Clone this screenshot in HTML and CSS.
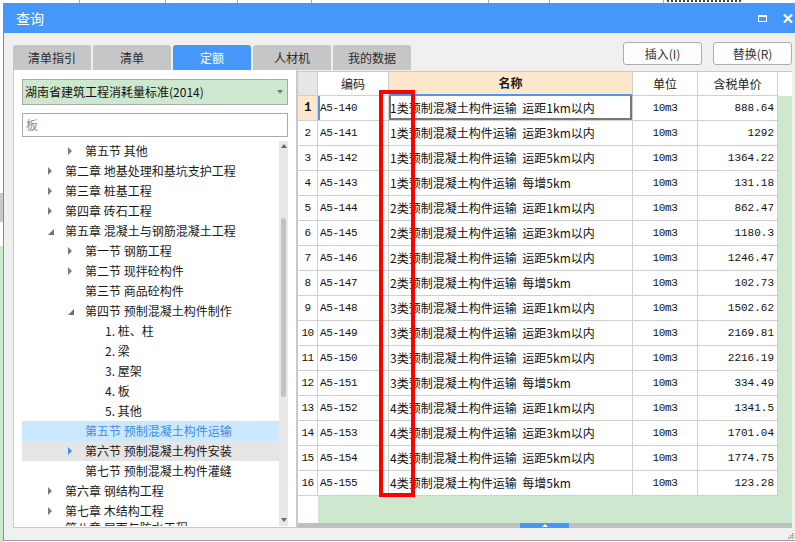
FILE: index.html
```html
<!DOCTYPE html>
<html lang="zh-CN">
<head>
<meta charset="utf-8">
<title>查询</title>
<link rel="stylesheet" href="styles.css">
</head>
<body>
<div class="app">
  <div class="app-top">
    <span class="ac w79"></span><span class="ac w86"></span><span class="ac w72"></span><span class="ac w74"></span><span class="ac w177"></span><span class="ac w61"></span><span class="ac w114"></span><span class="ac-text"></span>
  </div>
  <div class="app-side">
    <div class="side-a"></div>
    <div class="side-b"></div>
    <div class="side-c"></div>
    <div class="side-d"></div>
  </div>
</div>

<div class="dialog">
  <div class="titlebar">
    <span class="title">查询</span>
    <span class="win-btns">
      <span class="ico-max"></span>
      <svg class="ico-close" width="10" height="9" viewBox="0 0 10 9"><path d="M1 0.5 L9 8.5 M9 0.5 L1 8.5" stroke="#fff" stroke-width="2.2" fill="none"/></svg>
    </span>
  </div>

  <div class="content">
    <div class="toolbar">
      <div class="tabs">
        <div class="tab">清单指引</div>
        <div class="tab">清单</div>
        <div class="tab active">定额</div>
        <div class="tab">人材机</div>
        <div class="tab">我的数据</div>
      </div>
      <div class="actions">
        <button class="btn">插入(I)</button>
        <button class="btn">替换(R)</button>
      </div>
    </div>

    <div class="main">
      <div class="left">
        <div class="combo"><span>湖南省建筑工程消耗量标准(2014)</span><span class="caret"></span></div>
        <div class="search">板</div>
        <div class="tree-box">
          <ul class="tree">
            <li class="lv2"><span class="tg closed"></span>第五节 其他</li>
            <li class="lv1"><span class="tg closed"></span>第二章 地基处理和基坑支护工程</li>
            <li class="lv1"><span class="tg closed"></span>第三章 桩基工程</li>
            <li class="lv1"><span class="tg closed"></span>第四章 砖石工程</li>
            <li class="lv1"><span class="tg open"></span>第五章 混凝土与钢筋混凝土工程</li>
            <li class="lv2"><span class="tg closed"></span>第一节 钢筋工程</li>
            <li class="lv2"><span class="tg closed"></span>第二节 现拌砼构件</li>
            <li class="lv2"><span class="tg"></span>第三节 商品砼构件</li>
            <li class="lv2"><span class="tg open"></span>第四节 预制混凝土构件制作</li>
            <li class="lv3"><span class="tg"></span>1. 桩、柱</li>
            <li class="lv3"><span class="tg"></span>2. 梁</li>
            <li class="lv3"><span class="tg"></span>3. 屋架</li>
            <li class="lv3"><span class="tg"></span>4. 板</li>
            <li class="lv3"><span class="tg"></span>5. 其他</li>
            <li class="lv2 sel"><span class="tg"></span>第五节 预制混凝土构件运输</li>
            <li class="lv2 hover"><span class="tg closed"></span>第六节 预制混凝土构件安装</li>
            <li class="lv2"><span class="tg"></span>第七节 预制混凝土构件灌缝</li>
            <li class="lv1"><span class="tg closed"></span>第六章 钢结构工程</li>
            <li class="lv1"><span class="tg closed"></span>第七章 木结构工程</li>
            <li class="lv1 last"><span class="tg closed"></span>第八章 屋面与防水工程</li>
          </ul>
          <div class="vscroll">
            <span class="sc-up"></span>
            <span class="sc-thumb"></span>
            <span class="sc-down"></span>
          </div>
        </div>
      </div>

      <div class="grid">
        <div class="rows">
          <div class="c h hnum"></div>
          <div class="c h">编码</div>
          <div class="c h hname">名称</div>
          <div class="c h">单位</div>
          <div class="c h">含税单价</div>
          <div class="c h hfill"></div>

          <div class="c num cur">1</div><div class="c code curcode">A5-140</div><div class="c name curname">1类预制混凝土构件运输 运距1km以内</div><div class="c unit">10m3</div><div class="c price">888.64</div><div class="c fill"></div>
          <div class="c num">2</div><div class="c code">A5-141</div><div class="c name">1类预制混凝土构件运输 运距3km以内</div><div class="c unit">10m3</div><div class="c price">1292</div><div class="c fill"></div>
          <div class="c num">3</div><div class="c code">A5-142</div><div class="c name">1类预制混凝土构件运输 运距5km以内</div><div class="c unit">10m3</div><div class="c price">1364.22</div><div class="c fill"></div>
          <div class="c num">4</div><div class="c code">A5-143</div><div class="c name">1类预制混凝土构件运输 每增5km</div><div class="c unit">10m3</div><div class="c price">131.18</div><div class="c fill"></div>
          <div class="c num">5</div><div class="c code">A5-144</div><div class="c name">2类预制混凝土构件运输 运距1km以内</div><div class="c unit">10m3</div><div class="c price">862.47</div><div class="c fill"></div>
          <div class="c num">6</div><div class="c code">A5-145</div><div class="c name">2类预制混凝土构件运输 运距3km以内</div><div class="c unit">10m3</div><div class="c price">1180.3</div><div class="c fill"></div>
          <div class="c num">7</div><div class="c code">A5-146</div><div class="c name">2类预制混凝土构件运输 运距5km以内</div><div class="c unit">10m3</div><div class="c price">1246.47</div><div class="c fill"></div>
          <div class="c num">8</div><div class="c code">A5-147</div><div class="c name">2类预制混凝土构件运输 每增5km</div><div class="c unit">10m3</div><div class="c price">102.73</div><div class="c fill"></div>
          <div class="c num">9</div><div class="c code">A5-148</div><div class="c name">3类预制混凝土构件运输 运距1km以内</div><div class="c unit">10m3</div><div class="c price">1502.62</div><div class="c fill"></div>
          <div class="c num">10</div><div class="c code">A5-149</div><div class="c name">3类预制混凝土构件运输 运距3km以内</div><div class="c unit">10m3</div><div class="c price">2169.81</div><div class="c fill"></div>
          <div class="c num">11</div><div class="c code">A5-150</div><div class="c name">3类预制混凝土构件运输 运距5km以内</div><div class="c unit">10m3</div><div class="c price">2216.19</div><div class="c fill"></div>
          <div class="c num">12</div><div class="c code">A5-151</div><div class="c name">3类预制混凝土构件运输 每增5km</div><div class="c unit">10m3</div><div class="c price">334.49</div><div class="c fill"></div>
          <div class="c num">13</div><div class="c code">A5-152</div><div class="c name">4类预制混凝土构件运输 运距1km以内</div><div class="c unit">10m3</div><div class="c price">1341.5</div><div class="c fill"></div>
          <div class="c num">14</div><div class="c code">A5-153</div><div class="c name">4类预制混凝土构件运输 运距3km以内</div><div class="c unit">10m3</div><div class="c price">1701.04</div><div class="c fill"></div>
          <div class="c num">15</div><div class="c code">A5-154</div><div class="c name">4类预制混凝土构件运输 运距5km以内</div><div class="c unit">10m3</div><div class="c price">1774.75</div><div class="c fill"></div>
          <div class="c num">16</div><div class="c code">A5-155</div><div class="c name">4类预制混凝土构件运输 每增5km</div><div class="c unit">10m3</div><div class="c price">123.28</div><div class="c fill"></div>
        </div>
        <div class="grid-empty"><div class="ge-num"></div><div class="ge-fill"></div></div>
        <div class="hscroll"><div class="hthumb"><span class="hthumb-arrow"></span></div></div>
      </div>
    </div>
  </div>
  <svg class="grip" width="7" height="7" viewBox="0 0 7 7"><rect x="5" y="1" width="1.5" height="1.5" fill="#9a9a9a"/><rect x="3" y="3" width="1.5" height="1.5" fill="#9a9a9a"/><rect x="5" y="3" width="1.5" height="1.5" fill="#9a9a9a"/><rect x="1" y="5" width="1.5" height="1.5" fill="#9a9a9a"/><rect x="3" y="5" width="1.5" height="1.5" fill="#9a9a9a"/><rect x="5" y="5" width="1.5" height="1.5" fill="#9a9a9a"/></svg>
</div>

<div class="mark"></div>
</body>
</html>
```

FILE: styles.css
```css
* {
  box-sizing: border-box;
  margin: 0;
  padding: 0;
}

html, body {
  width: 795px;
  height: 542px;
  overflow: hidden;
}

body {
  position: relative;
  background: #fff;
  font-family: "Noto Sans CJK SC", "Microsoft YaHei", sans-serif;
  font-size: 12px;
  color: #1a1a1a;
}

/* background application, visible at the edges */
.app {
  display: flex;
  flex-direction: column;
  height: 542px;
}

.app-top {
  display: flex;
  height: 3px;
  flex: none;
}

.ac {
  height: 3px;
  border-right: 1px solid #a8a8a8;
}

.w79 { width: 80px; }
.w86 { width: 86px; }
.w72 { width: 72px; }
.w74 { width: 74px; }
.w177 { width: 177px; }
.w61 { width: 61px; }
.w114 { width: 114px; }

.ac-text {
  width: 74px;
  height: 2px;
  margin-left: 3px;
  border-bottom: 2px dotted #444;
}

.app-side {
  width: 3px;
  flex: 1;
  display: flex;
  flex-direction: column;
}

.side-a { height: 190px; background: #fff; }
.side-b { height: 29px; background: #c9c9c9; }
.side-c { height: 24px; background: #fff; }
.side-d { flex: 1; background: #cde8cf; }

/* dialog window */
.dialog {
  position: absolute;
  left: 3px;
  top: 3px;
  width: 792px;
  height: 538px;
  background: #f0f0f0;
  border-left: 1px solid #8c8c8c;
  border-bottom: 1px solid #a0a0a0;
  display: flex;
  flex-direction: column;
}

.titlebar {
  flex: none;
  height: 30px;
  background: #4598f9;
  color: #fff;
  display: flex;
  align-items: center;
  justify-content: space-between;
  padding: 0 2px 0 12px;
}

.title {
  font-size: 14px;
  line-height: 1;
}

.win-btns {
  display: flex;
  align-items: center;
  gap: 16px;
}

.ico-max {
  width: 9px;
  height: 7px;
  border: 1.5px solid #fff;
  border-top-width: 2.5px;
}

.ico-close {
  display: block;
}

.content {
  flex: 1;
  display: flex;
  flex-direction: column;
  padding: 9px 3px 12px 9px;
  min-height: 0;
}

.toolbar {
  flex: none;
  height: 28px;
  display: flex;
  justify-content: space-between;
}

.tabs {
  align-self: flex-end;
  display: flex;
  gap: 2px;
}

.tab {
  width: 78px;
  height: 25px;
  background: #c6c6c6;
  border-radius: 3px 3px 0 0;
  display: flex;
  align-items: center;
  justify-content: center;
  font-size: 12px;
  line-height: 1;
  color: #2b2b2b;
}

.tab.active {
  background: #4598f9;
  color: #fff;
}

.actions {
  display: flex;
  gap: 11px;
  align-self: flex-start;
}

.btn {
  width: 79px;
  height: 23px;
  background: #fdfdfd;
  border: 1px solid #adadad;
  border-radius: 3px;
  font-family: inherit;
  font-size: 12px;
  color: #333;
  line-height: 1;
}

.main {
  flex: 1;
  display: flex;
  min-height: 0;
}

/* left tree panel */
.left {
  width: 284px;
  flex: none;
  background: #fff;
  border: 1px solid #c9c9c9;
  border-top: none;
  padding: 9px 8px 1px 8px;
  display: flex;
  flex-direction: column;
  min-height: 0;
}

.combo {
  flex: none;
  height: 26px;
  background: #cce8cf;
  border: 1px solid #a9a9a9;
  display: flex;
  align-items: center;
  justify-content: space-between;
  padding: 0 4px 0 2px;
  font-size: 12px;
  line-height: 1;
  color: #111;
}

.caret {
  width: 0;
  height: 0;
  border-top: 4px solid #7a7a7a;
  border-left: 3.5px solid transparent;
  border-right: 3.5px solid transparent;
}

.search {
  flex: none;
  height: 24px;
  margin-top: 8px;
  border: 1px solid #a9a9a9;
  padding-left: 3px;
  display: flex;
  align-items: center;
  color: #8a8a8a;
  line-height: 1;
}

.tree-box {
  flex: 1;
  margin-top: 4px;
  display: flex;
  min-height: 0;
  overflow: hidden;
}

.tree {
  list-style: none;
  flex: 1;
  overflow: hidden;
}

.tree li {
  height: 20px;
  display: flex;
  align-items: center;
  white-space: nowrap;
  line-height: 20px;
  color: #1a1a1a;
}

.tree li.last {
  align-items: flex-start;
  line-height: 14px;
}

.lv1 { padding-left: 26px; }
.lv2 { padding-left: 46px; }
.lv3 { padding-left: 66px; }

.tg {
  flex: none;
  width: 17px;
  height: 20px;
  display: flex;
  align-items: center;
}

.tg.closed::before {
  content: "";
  width: 0;
  height: 0;
  border-left: 4px solid #7b7b7b;
  border-top: 4px solid transparent;
  border-bottom: 4px solid transparent;
}

.tg.open::before {
  content: "";
  width: 0;
  height: 0;
  margin-top: 1px;
  border-bottom: 6px solid #6f6f6f;
  border-left: 6px solid transparent;
}

.tree li.sel {
  background: #cce8ff;
  color: #3a8de6;
}

.tree li.hover {
  background: #e5e5e5;
}

.tree li.hover .tg::before {
  border-left-color: #3b8ff0;
}

.vscroll {
  width: 9px;
  flex: none;
  background: #e8e8e8;
  display: flex;
  flex-direction: column;
  align-items: center;
}

.sc-up {
  margin-top: 3px;
  width: 0;
  height: 0;
  border-bottom: 4px solid #666;
  border-left: 3.5px solid transparent;
  border-right: 3.5px solid transparent;
}

.sc-thumb {
  margin-top: 70px;
  width: 5px;
  height: 179px;
  border-radius: 3px;
  background: #c2c2c2;
}

.sc-down {
  margin-top: auto;
  margin-bottom: 4px;
  width: 0;
  height: 0;
  border-top: 4px solid #666;
  border-left: 3.5px solid transparent;
  border-right: 3.5px solid transparent;
}

/* right grid */
.grid {
  width: 495px;
  flex: none;
  margin-top: 1px;
  background: #fff;
  border-left: 1px solid #c9c9c9;
  border-top: 1px solid #c9c9c9;
  display: flex;
  flex-direction: column;
  min-height: 0;
}

.rows {
  display: grid;
  grid-template-columns: 20px 71px 244px 65px 80px 14px;
  grid-auto-rows: 25px;
  grid-template-rows: 24px;
}

.c {
  border-right: 1px solid #cfcfcf;
  border-bottom: 1px solid #cfcfcf;
  display: flex;
  align-items: center;
  white-space: nowrap;
  overflow: hidden;
  line-height: 1;
}

.h {
  justify-content: center;
  font-size: 12px;
  color: #1a1a1a;
}

.hnum {
  background: #e6e6e6;
}

.hname {
  background: #fde8cd;
  font-weight: bold;
  border-bottom: 2px solid #4598f9;
}

.hfill {
  border-right: none;
  border-bottom: none;
}

.num {
  justify-content: center;
  font-family: "Liberation Mono", monospace;
  font-size: 11px;
  letter-spacing: -0.5px;
  color: #111;
}

.num.cur {
  background: #fde8cd;
  font-weight: bold;
  font-size: 12px;
}

.code {
  padding-left: 2px;
  font-family: "Liberation Mono", monospace;
  font-size: 11px;
  letter-spacing: -0.4px;
  color: #111;
}

.curcode {
  box-shadow: inset 2px 0 #4598f9;
}

.name {
  padding-left: 1px;
  font-size: 12px;
  word-spacing: 3px;
  color: #111;
}

.curname {
  box-shadow: inset 2px 0 #777, inset -2px 0 #777, inset 0 -2px #777;
}

.unit {
  justify-content: center;
  font-family: "Liberation Mono", monospace;
  font-size: 11px;
  letter-spacing: -0.3px;
  color: #111;
}

.price {
  justify-content: flex-end;
  padding-right: 3px;
  font-family: "Liberation Mono", monospace;
  font-size: 11px;
  color: #111;
}

.fill {
  background: #cde8cf;
  border-right: none;
  border-bottom: none;
}

.grid-empty {
  flex: 1;
  display: flex;
}

.ge-num {
  width: 20px;
  background: #fff;
}

.ge-fill {
  flex: 1;
  background: #cde8cf;
}

.hscroll {
  flex: none;
  height: 5px;
  background: #c0c0c0;
}

.hthumb {
  margin-left: 222px;
  width: 49px;
  height: 5px;
  background: #4598f9;
  display: flex;
  justify-content: center;
  align-items: center;
}

.hthumb-arrow {
  width: 0;
  height: 0;
  border-bottom: 3px solid #fff;
  border-left: 3px solid transparent;
  border-right: 3px solid transparent;
}

.grip {
  position: absolute;
  right: 1px;
  bottom: 1px;
}

/* red annotation frame drawn over the grid */
.mark {
  position: absolute;
  left: 379px;
  top: 90px;
  width: 36px;
  height: 407px;
  border: 4px solid #ff0000;
}
```
